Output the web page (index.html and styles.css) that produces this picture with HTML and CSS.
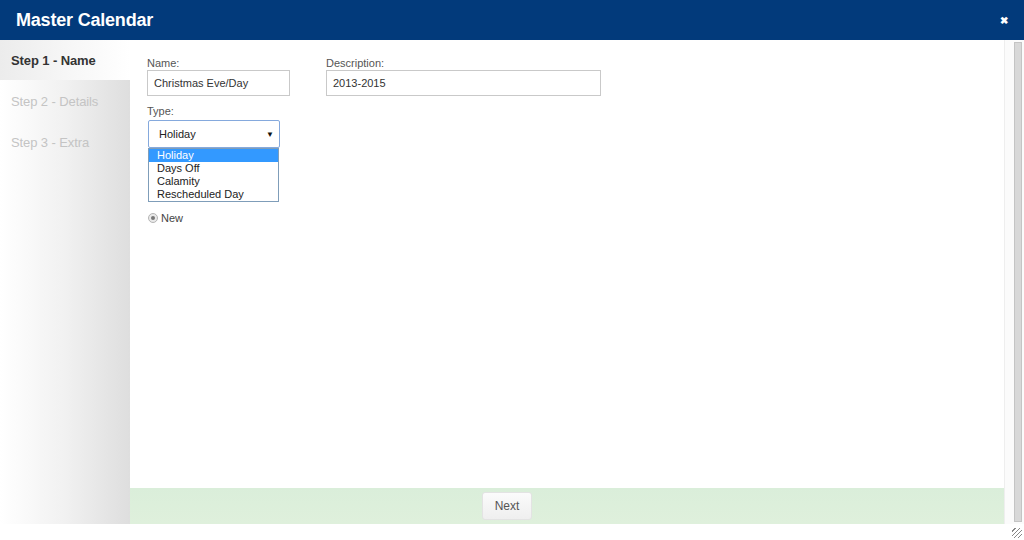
FILE: index.html
```html
<!DOCTYPE html>
<html>
<head>
<meta charset="utf-8">
<link rel="stylesheet" href="styles.css">
</head>
<body>
<div class="dialog">
  <div class="titlebar">
    <span class="title">Master Calendar</span>
    <span class="close">&#x2716;</span>
  </div>
  <div class="main">
    <div class="sidebar">
      <div class="step active">Step 1 - Name</div>
      <div class="step">Step 2 - Details</div>
      <div class="step">Step 3 - Extra</div>
    </div>
    <div class="content">
      <div class="form">
        <div class="row">
          <div class="field">
            <div class="label">Name:</div>
            <div class="input name">Christmas Eve/Day</div>
          </div>
          <div class="field">
            <div class="label">Description:</div>
            <div class="input desc">2013-2015</div>
          </div>
        </div>
        <div class="field">
          <div class="label">Type:</div>
          <div class="select"><span>Holiday</span><span class="arrow">&#9660;</span></div>
          <div class="list">
            <div class="opt sel">Holiday</div>
            <div class="opt">Days Off</div>
            <div class="opt">Calamity</div>
            <div class="opt">Rescheduled Day</div>
          </div>
        </div>
        <div class="radio-row"><span class="radio"><span class="dot"></span></span><span class="rlabel">New</span></div>
      </div>
      <div class="footer"><div class="btn">Next</div></div>
    </div>
    <div class="scroll"><div class="thumb"></div></div>
  </div>
  <div class="bottom"><span class="grip"></span></div>
</div>
</body>
</html>
```
FILE: styles.css
```css
html, body { margin: 0; padding: 0; background: #fff; }
body { font-family: "Liberation Sans", Arial, sans-serif; width: 1024px; height: 540px; overflow: hidden; }
.dialog { display: flex; flex-direction: column; height: 540px; }
.titlebar { height: 40px; background: #023a7b; display: flex; align-items: center; justify-content: space-between; padding: 0 16px 0 16px; box-sizing: border-box; flex: none; }
.title { color: #fff; font-weight: bold; font-size: 18px; letter-spacing: -0.2px; }
.close { color: #fff; font-size: 10px; font-weight: bold; margin-top: 1px; }
.main { display: flex; height: 484px; flex: none; }
.sidebar { width: 130px; flex: none; background: linear-gradient(to right, #ffffff 0%, #f1f1f1 50%, #dedede 100%); }
.step { height: 41px; box-sizing: border-box; padding: 14px 0 0 11px; font-size: 13px; color: #c4c4c4; letter-spacing: -0.1px; }
.step.active { background: linear-gradient(to right, #ececec 0%, #f6f6f6 50%, #ffffff 100%); color: #333; font-weight: bold; height: 40px; padding-top: 13px; }
.content { flex: 1; display: flex; flex-direction: column; }
.form { flex: 1; padding: 17px 0 0 17px; }
.row { display: flex; gap: 36px; }
.label { font-size: 11px; color: #555; height: 13px; line-height: 13px; }
.input { box-sizing: border-box; height: 26px; border: 1px solid #c9c9c9; font-size: 11px; color: #333; padding: 6px 0 0 6px; }
.input.name { width: 143px; }
.input.desc { width: 275px; }
.row + .field { margin-top: 9px; }
.select { margin-left: 1px; margin-top: 2px; box-sizing: border-box; width: 132px; height: 28px; border: 1px solid #85a9dd; border-radius: 2px; display: flex; align-items: center; justify-content: space-between; padding: 0 5px 0 10px; font-size: 11px; color: #222; }
.arrow { font-size: 8px; color: #111; }
.list { margin-left: 1px; box-sizing: border-box; width: 131px; border: 1px solid #7f9db9; padding: 0; }
.opt { font-size: 11px; line-height: 13px; height: 13px; color: #222; padding-left: 8px; }
.opt.sel { background: #3399ff; color: #fff; }
.radio-row { display: flex; align-items: center; margin-top: 10px; margin-left: 1px; }
.radio { width: 10px; height: 10px; border-radius: 50%; border: 1px solid #b5b5b5; background: #e9e9e9; box-sizing: border-box; display: flex; align-items: center; justify-content: center; }
.dot { width: 4px; height: 4px; border-radius: 50%; background: #777; }
.rlabel { font-size: 11px; color: #444; margin-left: 3px; }
.footer { height: 36px; background: linear-gradient(#daeeda, #dff0dc); display: flex; justify-content: flex-start; align-items: center; padding-left: 352px; flex: none; }
.btn { width: 50px; height: 28px; box-sizing: border-box; border: 1px solid #e3e3e3; border-radius: 3px; background: linear-gradient(#fbfbfb, #efefef); font-size: 12px; color: #555; display: flex; align-items: center; justify-content: center; }
.scroll { width: 20px; flex: none; box-sizing: border-box; padding: 2px 2px 2px 9px; background: #fbfbfb; border-left: 1px solid #eee; }
.thumb { height: 100%; background: #d8d8d8; border: 1px solid #c4c4c4; box-sizing: border-box; }
.bottom { flex: 1; display: flex; justify-content: flex-end; align-items: flex-end; }
.grip { width: 10px; height: 10px; margin: 0 2px 2px 0; background: repeating-linear-gradient(135deg, transparent 0 2px, #888 2px 3px); }
```
